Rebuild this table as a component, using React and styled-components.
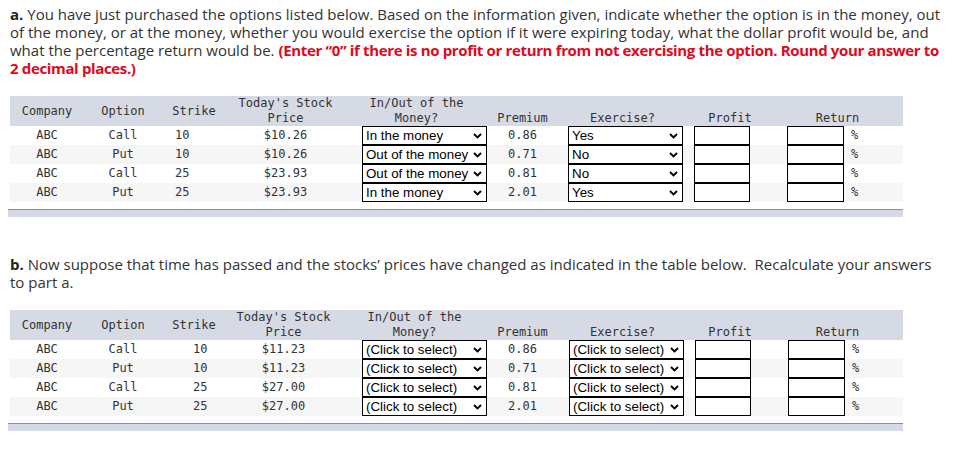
import React from "react";
import styled, { createGlobalStyle } from "styled-components";

const GlobalStyle = createGlobalStyle`
  html, body { margin: 0; padding: 0; background: #ffffff; }
  body { font-family: "Open Sans", "Liberation Sans", sans-serif; }
`;

const Page = styled.div`
  padding: 5px 12px 20px 10px;
  width: 957px;
  box-sizing: border-box;
`;

const Prompt = styled.p`
  margin: 0;
  font-family: "Open Sans", "Liberation Sans", sans-serif;
  font-size: 15px;
  line-height: 18px;
  color: #333333;
  margin-top: ${(p) => p.$top || 0}px;
`;

const Label = styled.b`
  font-weight: 700;
  color: #222;
`;

const Warn = styled.strong`
  color: #e0081c;
  font-weight: 700;
  letter-spacing: -0.35px;
`;

const Block = styled.section`
  margin-top: 19px;
`;

const Grid = styled.table`
  width: 893px;
  border-collapse: collapse;
  border-spacing: 0;
  table-layout: fixed;
  font-family: "DejaVu Sans Mono", "Liberation Mono", monospace;
  font-size: 12px;
  color: #333333;
`;

const HeadRow = styled.tr`
  background: #d6dae5;
  height: 30px;
`;

const Th = styled.th`
  font-weight: 400;
  padding: 0;
  line-height: 15px;
  text-align: center;
  vertical-align: ${(p) => (p.$bottom ? "bottom" : "middle")};
`;

const Row = styled.tr`
  height: 19px;
  background: ${(p) => (p.$alt ? "#f6f6f6" : "#ffffff")};
`;

const Td = styled.td`
  padding: 0;
  padding-left: ${(p) => p.$pl || 0}px;
  height: 19px;
  line-height: 19px;
  text-align: ${(p) => p.$align || "center"};
  white-space: nowrap;
  vertical-align: middle;
`;

const SelectWrap = styled.div`
  position: relative;
  width: ${(p) => p.$w}px;
  height: 19px;
`;

const Select = styled.select`
  appearance: none;
  -webkit-appearance: none;
  width: 100%;
  height: 19px;
  box-sizing: border-box;
  border: 1px solid #000;
  border-radius: 0;
  background: #fff;
  margin: 0;
  padding: 0 0 0 3px;
  font-family: "Liberation Sans", Arial, sans-serif;
  font-size: 13.33px;
  line-height: 17px;
  color: #000;
  outline: none;
`;

const Chevron = styled.svg`
  position: absolute;
  right: 5px;
  top: 7px;
  pointer-events: none;
`;

const Field = styled.input`
  width: ${(p) => p.$w}px;
  height: 19px;
  box-sizing: border-box;
  border: 1px solid #000;
  margin: 0;
  padding: 0 3px;
  vertical-align: middle;
  background: #fff;
`;

const Pct = styled.span`
  margin-left: 7px;
  color: #333;
  vertical-align: middle;
`;

const Bar = styled.div`
  margin-top: 7px;
  margin-left: -2px;
  width: 895px;
  height: 7px;
  background: #d6dae5;
  border-top: 1px solid #8d8f95;
`;

const Dropdown = ({ width, value, options }) => (
  <SelectWrap $w={width}>
    <Select defaultValue={value}>
      {options.map((o) => (
        <option key={o}>{o}</option>
      ))}
    </Select>
    <Chevron width="9" height="6" viewBox="0 0 9 6">
      <polyline points="1,1 4.5,4.5 8,1" fill="none" stroke="#000" strokeWidth="1.9" />
    </Chevron>
  </SelectWrap>
);

const moneyOpts = ["(Click to select)", "In the money", "Out of the money", "At the money"];
const exOpts = ["(Click to select)", "Yes", "No"];

const OptionsTable = ({ rows, cols, strikeAlign, strikePad, selPad }) => (
  <Block>
    <Grid>
      <colgroup>
        {cols.map((w, i) => (
          <col key={i} style={{ width: w }} />
        ))}
      </colgroup>
      <thead>
        <HeadRow>
          <Th>Company</Th>
          <Th>Option</Th>
          <Th>Strike</Th>
          <Th $bottom>Today's Stock<br />Price</Th>
          <Th $bottom>In/Out of the<br />Money?</Th>
          <Th $bottom>Premium</Th>
          <Th $bottom>Exercise?</Th>
          <Th $bottom>Profit</Th>
          <Th $bottom>Return</Th>
        </HeadRow>
      </thead>
      <tbody>
        {rows.map((r, i) => (
          <Row key={i} $alt={i % 2 === 1}>
            <Td>ABC</Td>
            <Td>{r.opt}</Td>
            <Td $align={strikeAlign} $pl={strikePad}>{r.strike}</Td>
            <Td>{r.price}</Td>
            <Td $align="left" $pl={selPad[0]}>
              <Dropdown width={selPad[1]} value={r.money} options={moneyOpts} />
            </Td>
            <Td>{r.prem}</Td>
            <Td $align="left" $pl={selPad[2]}>
              <Dropdown width={115} value={r.ex} options={exOpts} />
            </Td>
            <Td $align="left" $pl={selPad[3]}>
              <Field $w={56} />
            </Td>
            <Td $align="left" $pl={selPad[4]}>
              <Field $w={57} />
              <Pct>%</Pct>
            </Td>
          </Row>
        ))}
      </tbody>
    </Grid>
    <Bar />
  </Block>
);

const rowsA = [
  { opt: "Call", strike: "10", price: "$10.26", money: "In the money", prem: "0.86", ex: "Yes" },
  { opt: "Put", strike: "10", price: "$10.26", money: "Out of the money", prem: "0.71", ex: "No" },
  { opt: "Call", strike: "25", price: "$23.93", money: "Out of the money", prem: "0.81", ex: "No" },
  { opt: "Put", strike: "25", price: "$23.93", money: "In the money", prem: "2.01", ex: "Yes" },
];

const rowsB = [
  { opt: "Call", strike: "10", price: "$11.23", money: "(Click to select)", prem: "0.86", ex: "(Click to select)" },
  { opt: "Put", strike: "10", price: "$11.23", money: "(Click to select)", prem: "0.71", ex: "(Click to select)" },
  { opt: "Call", strike: "25", price: "$27.00", money: "(Click to select)", prem: "0.81", ex: "(Click to select)" },
  { opt: "Put", strike: "25", price: "$27.00", money: "(Click to select)", prem: "2.01", ex: "(Click to select)" },
];

export default function App() {
  return (
    <Page>
      <GlobalStyle />
      <Prompt>
        <Label>a.</Label> You have just purchased the options listed below. Based on the information given,
        indicate whether the option is in the money, out of the money, or at the money, whether you would
        exercise the option if it were expiring today, what the dollar profit would be, and what the
        percentage return would be.{" "}
        <Warn>
          (Enter “0” if there is no profit or return from not exercising the option. Round your answer to 2
          decimal places.)
        </Warn>
      </Prompt>
      <OptionsTable
        rows={rowsA}
        cols={[74, 78, 64, 119, 143, 69, 131, 84, 131]}
        strikeAlign="left"
        strikePad={13}
        selPad={[17, 125, 11, 6, 15]}
      />
      <Prompt $top={38}>
        <Label>b.</Label> Now suppose that time has passed and the stocks’ prices have changed as indicated in
        the table below.&nbsp; Recalculate your answers to part a.
      </Prompt>
      <OptionsTable
        rows={rowsB}
        cols={[74, 78, 64, 115, 147, 69, 131, 84, 131]}
        strikeAlign="left"
        strikePad={31}
        selPad={[21, 125, 12, 7, 16]}
      />
    </Page>
  );
}
